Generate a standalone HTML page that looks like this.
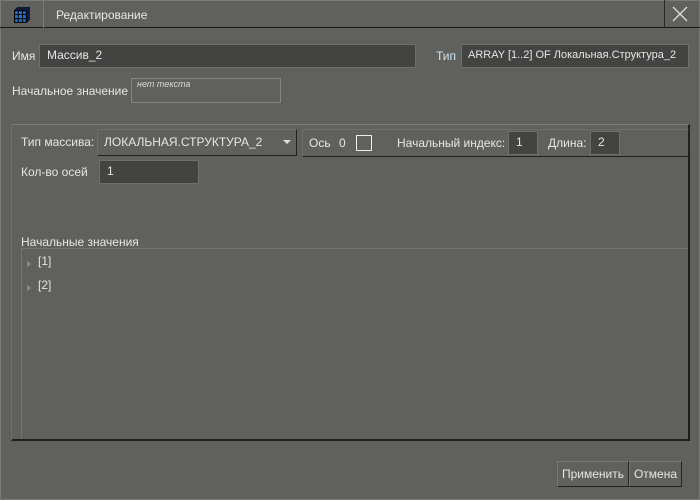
<!DOCTYPE html>
<html><head><meta charset="utf-8"><style>
*{box-sizing:border-box;margin:0;padding:0}
body{width:700px;height:500px;background:#60605d;font-family:"Liberation Sans","DejaVu Sans",sans-serif;font-size:12px;color:#e6e6e6;position:relative;overflow:hidden}
.a{position:absolute}
.inp{position:absolute;background:#434341;border:1px solid #6e6e6b;padding-left:7px;line-height:21px;color:#e6e6e6;white-space:nowrap;overflow:hidden}
</style></head><body>
<div class="a" style="left:0;top:0;width:700px;height:500px;border:1px solid #7a7a77"></div>
<div class="a" style="left:0;top:0;width:700px;height:28px;border-bottom:1px solid #1a1a1a"></div>
<div class="a" style="left:43px;top:0;width:1px;height:28px;background:#7a7a77"></div>
<div class="a" style="left:664px;top:0;width:1px;height:28px;background:#2a2a2a"></div>
<svg class="a" style="left:13px;top:6px" width="18" height="18" viewBox="0 0 17 17"><path d="M1 4 L4 1 L16 1 L16 13 L13 16 L1 16Z" fill="#0a1a3a"/><rect x="1.5" y="4.5" width="11" height="11" fill="#1e78d8" stroke="#000" stroke-width="1"/><path d="M5 4.5V15.5M9 4.5V15.5M1.5 8H12.5M1.5 12H12.5" stroke="#000"/></svg>
<div class="a" style="left:56px;top:8px;color:#e8e8e8">Редактирование</div>
<svg class="a" style="left:672px;top:6px" width="16" height="16"><path d="M1 1L15 15M15 1L1 15" stroke="#ddd" stroke-width="1.3"/></svg>

<div class="a" style="left:12px;top:49px">Имя</div>
<div class="inp" style="left:39px;top:44px;width:377px;height:24px">Массив_2</div>
<div class="a" style="left:436px;top:49px;color:#cfe2ee">Тип</div>
<div class="inp" style="left:461px;top:44px;width:228px;height:24px;font-size:11px;padding-left:6px">ARRAY [1..2] OF Локальная.Структура_2</div>
<div class="a" style="left:12px;top:84px">Начальное значение</div>
<div class="a" style="left:131px;top:78px;width:150px;height:25px;border:1px solid #858582"></div>
<div class="a" style="left:137px;top:79px;font-size:9px;font-style:italic;color:#ddd">нет текста</div>

<div class="a" style="left:11px;top:124px;width:679px;height:317px;border-top:1px solid #7a7a77;border-left:1px solid #6f6f6c;border-right:2px solid #1e1e1e;border-bottom:2px solid #1e1e1e"></div>
<div class="a" style="left:21px;top:135px">Тип массива:</div>
<div class="a" style="left:97px;top:129px;width:200px;height:27px;border:1px solid #6e6e6b;border-right-color:#222;border-bottom:1px solid #222"></div>
<div class="a" style="left:104px;top:135px">ЛОКАЛЬНАЯ.СТРУКТУРА_2</div>
<div class="a" style="left:283px;top:140px;width:0;height:0;border-left:4px solid transparent;border-right:4px solid transparent;border-top:4px solid #ddd"></div>
<div class="a" style="left:302px;top:129px;width:387px;height:28px;border:1px solid #6e6e6b;border-bottom:1px solid #222;border-right:1px solid #222"></div>
<div class="a" style="left:309px;top:136px">Ось</div>
<div class="a" style="left:339px;top:136px">0</div>
<div class="a" style="left:356px;top:135px;width:16px;height:16px;border:1px solid #eee"></div>
<div class="a" style="left:397px;top:136px">Начальный индекс:</div>
<div class="inp" style="left:508px;top:131px;width:30px;height:24px">1</div>
<div class="a" style="left:548px;top:136px">Длина:</div>
<div class="inp" style="left:590px;top:131px;width:30px;height:24px">2</div>

<div class="a" style="left:21px;top:165px">Кол-во осей</div>
<div class="inp" style="left:99px;top:160px;width:100px;height:24px">1</div>
<div class="a" style="left:21px;top:235px">Начальные значения</div>
<div class="a" style="left:21px;top:248px;width:667px;height:191px;border-top:1px solid #737370;border-left:1px solid #737370"></div>
<div class="a" style="left:27px;top:261px;width:0;height:0;border-top:3px solid transparent;border-bottom:3px solid transparent;border-left:4px solid #8a8a87"></div>
<div class="a" style="left:38px;top:254px">[1]</div>
<div class="a" style="left:27px;top:285px;width:0;height:0;border-top:3px solid transparent;border-bottom:3px solid transparent;border-left:4px solid #8a8a87"></div>
<div class="a" style="left:38px;top:278px">[2]</div>

<div class="a" style="left:557px;top:461px;width:72px;height:26px;border:1px solid #777;border-right-color:#222;border-bottom-color:#222;text-align:center;line-height:24px">Применить</div>
<div class="a" style="left:629px;top:461px;width:53px;height:26px;border:1px solid #777;border-right-color:#222;border-bottom-color:#222;text-align:center;line-height:24px">Отмена</div>
</body></html>
